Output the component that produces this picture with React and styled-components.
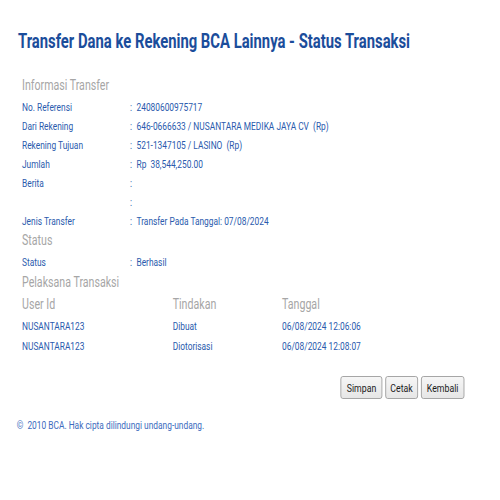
import React from "react";
import styled, { createGlobalStyle } from "styled-components";

const K = 0.76;

const Global = createGlobalStyle`
  html, body { margin: 0; padding: 0; background: #fff; overflow: hidden; }
  body { font-family: Roboto, "Liberation Sans", Arial, sans-serif; }
`;

const Page = styled.div`
  width: ${500 / K}px;
  transform: scaleX(${K});
  transform-origin: 0 0;
  padding-top: 30px;
  box-sizing: border-box;
`;

const Title = styled.h1`
  margin: 0 0 0 ${18 / K}px;
  font-size: 19.5px;
  line-height: 24px;
  font-weight: 700;
  color: #1b4d9b;
  white-space: nowrap;
`;

const Content = styled.div`
  padding-left: ${22 / K}px;
`;

const SectionTitle = styled.div`
  font-size: 14px;
  line-height: 18px;
  color: #a6a6a6;
  margin-top: ${(p) => p.$mt || 0}px;
  margin-bottom: 4px;
  white-space: nowrap;
`;

const InfoList = styled.div`
  display: grid;
  grid-template-columns: ${(130 - 22) / K}px ${6.5 / K}px 1fr;
  grid-auto-rows: 19px;
  align-items: center;
  font-size: 11px;
  color: #2a5aad;
  white-space: nowrap;
`;

const Cell = styled.span`
  line-height: 19px;
`;

const Table = styled.div`
  display: grid;
  grid-template-columns: ${(172.7 - 22) / K}px ${(282 - 172.7) / K}px 1fr;
  white-space: nowrap;
`;

const HeadCell = styled.div`
  font-size: 14px;
  line-height: 18px;
  color: #a6a6a6;
  padding-bottom: 4px;
`;

const DataCell = styled.div`
  font-size: 11px;
  line-height: 19.5px;
  color: #2a5aad;
`;

const Actions = styled.div`
  display: flex;
  justify-content: flex-end;
  gap: ${2.7 / K}px;
  margin-top: 20px;
  padding-right: ${(500 - 464.5) / K}px;
`;

const Button = styled.button`
  height: 23px;
  padding: 0 ${(p) => p.$px}px;
  font-family: Roboto, "Liberation Sans", Arial, sans-serif;
  font-size: 11.5px;
  color: #1a1a1a;
  background: linear-gradient(#f6f6f6, #e6e6e6);
  border: 1px solid #9a9a9a;
  border-radius: 3px;
  box-sizing: border-box;
  cursor: pointer;
`;

const Footer = styled.div`
  margin: 20px 0 0 ${16.7 / K}px;
  font-size: 11px;
  line-height: 14px;
  color: #3c6bbe;
  white-space: nowrap;
`;

const info = [
  ["No. Referensi", "24080600975717"],
  ["Dari Rekening", "646-0666633 / NUSANTARA MEDIKA JAYA CV\u00a0\u00a0(Rp)"],
  ["Rekening Tujuan", "521-1347105 / LASINO\u00a0\u00a0(Rp)"],
  ["Jumlah", "Rp\u00a0\u00a038,544,250.00"],
  ["Berita", ""],
  ["", ""],
  ["Jenis Transfer", "Transfer Pada Tanggal: 07/08/2024"],
];

const log = [
  ["NUSANTARA123", "Dibuat", "06/08/2024 12:06:06"],
  ["NUSANTARA123", "Diotorisasi", "06/08/2024 12:08:07"],
];

export default function App() {
  return (
    <Page>
      <Global />
      <Title>Transfer Dana ke Rekening BCA Lainnya - Status Transaksi</Title>
      <Content>
        <SectionTitle $mt={22}>Informasi Transfer</SectionTitle>
        <InfoList>
          {info.map(([label, value], i) => (
            <React.Fragment key={i}>
              <Cell>{label}</Cell>
              <Cell>:</Cell>
              <Cell>{value}</Cell>
            </React.Fragment>
          ))}
        </InfoList>
        <SectionTitle>Status</SectionTitle>
        <InfoList>
          <Cell>Status</Cell>
          <Cell>:</Cell>
          <Cell>Berhasil</Cell>
        </InfoList>
        <SectionTitle $mt={1}>Pelaksana Transaksi</SectionTitle>
        <Table>
          <HeadCell>User Id</HeadCell>
          <HeadCell>Tindakan</HeadCell>
          <HeadCell>Tanggal</HeadCell>
          {log.map((r, i) =>
            r.map((c, j) => <DataCell key={i + "-" + j}>{c}</DataCell>)
          )}
        </Table>
      </Content>
      <Actions>
        <Button $px={7}>Simpan</Button>
        <Button $px={6}>Cetak</Button>
        <Button $px={7}>Kembali</Button>
      </Actions>
      <Footer>©&nbsp; 2010 BCA. Hak cipta dilindungi undang-undang.</Footer>
    </Page>
  );
}
